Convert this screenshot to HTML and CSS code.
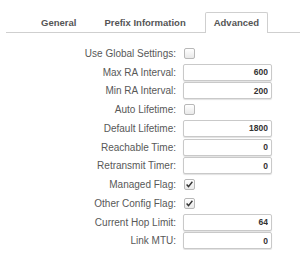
FILE: index.html
```html
<!DOCTYPE html>
<html lang="en">
<head>
    <meta charset="UTF-8">
    <title>Router Advertisement - Advanced</title>
    <link rel="stylesheet" href="styles.css">
</head>
<body>

    <!-- Tabs -->
    <div class="tabs">
        <div class="tab">General</div>
        <div class="tab">Prefix Information</div>
        <div class="tab active">Advanced</div>
    </div>

    <!-- Advanced settings -->
    <div class="form">
        <label class="label">Use Global Settings:</label>
        <div class="field"><span class="check"></span></div>

        <label class="label">Max RA Interval:</label>
        <div class="field"><input class="num" type="text" value="600"></div>

        <label class="label">Min RA Interval:</label>
        <div class="field"><input class="num" type="text" value="200"></div>

        <label class="label">Auto Lifetime:</label>
        <div class="field"><span class="check"></span></div>

        <label class="label">Default Lifetime:</label>
        <div class="field"><input class="num" type="text" value="1800"></div>

        <label class="label">Reachable Time:</label>
        <div class="field"><input class="num" type="text" value="0"></div>

        <label class="label">Retransmit Timer:</label>
        <div class="field"><input class="num" type="text" value="0"></div>

        <label class="label">Managed Flag:</label>
        <div class="field">
            <span class="check">
                <svg width="9" height="9" viewBox="0 0 9 9"><path d="M1.6 4.6 L3.5 6.6 L7.4 1.8" fill="none" stroke="#333" stroke-width="1.4"/></svg>
            </span>
        </div>

        <label class="label">Other Config Flag:</label>
        <div class="field">
            <span class="check">
                <svg width="9" height="9" viewBox="0 0 9 9"><path d="M1.6 4.6 L3.5 6.6 L7.4 1.8" fill="none" stroke="#333" stroke-width="1.4"/></svg>
            </span>
        </div>

        <label class="label">Current Hop Limit:</label>
        <div class="field"><input class="num" type="text" value="64"></div>

        <label class="label">Link MTU:</label>
        <div class="field"><input class="num" type="text" value="0"></div>
    </div>

</body>
</html>
```

FILE: styles.css
```css
/* General */
body {
    margin: 0;
    background: #fff;
    font-family: "Liberation Sans", Arial, sans-serif;
    color: #555;
}

/* Tabs */
.tabs {
    display: flex;
    margin: 12px 0 0 6px;
    padding-left: 26px;
    gap: 10px;
    border-bottom: 1px solid #cfcfcf;
}

.tab {
    height: 19px;
    line-height: 19px;
    padding: 0 8px;
    font-size: 9.5px;
    font-weight: bold;
    color: #555;
    border: 1px solid transparent;
    border-bottom: none;
    margin-bottom: -1px;
}

.tab.active {
    background: #fff;
    border-color: #cfcfcf;
    border-radius: 2px 2px 0 0;
    height: 20px;
}

/* Form rows */
.form {
    display: grid;
    grid-template-columns: 176px 89px;
    grid-auto-rows: 18.75px;
    column-gap: 7px;
    margin-top: 11px;
    align-items: center;
}

.label {
    text-align: right;
    font-size: 10px;
    color: #585858;
    white-space: nowrap;
}

.field {
    display: flex;
    align-items: center;
}

.num {
    box-sizing: border-box;
    width: 89px;
    height: 17px;
    margin: 0;
    padding: 0 3px;
    border: 1px solid #c9c9c9;
    border-radius: 2px;
    box-shadow: 0 1px 1px rgba(0, 0, 0, 0.12);
    text-align: right;
    font-family: "Liberation Sans", Arial, sans-serif;
    font-size: 8.5px;
    font-weight: bold;
    color: #333;
    background: #fff;
}

.check {
    box-sizing: border-box;
    width: 11px;
    height: 11px;
    margin-left: 1px;
    border: 1px solid #b8b8b8;
    border-radius: 2px;
    background: linear-gradient(#fff, #e9e9e9);
    display: flex;
    align-items: center;
    justify-content: center;
}
```
